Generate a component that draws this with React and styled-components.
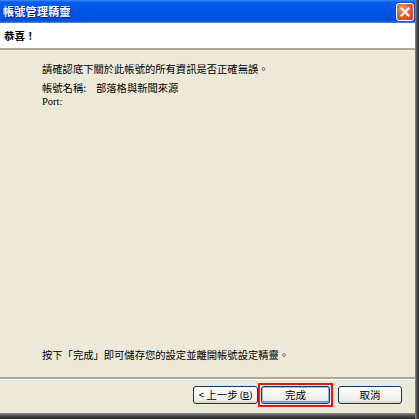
import React from "react";
import styled, { createGlobalStyle } from "styled-components";

const Global = createGlobalStyle`
  html, body { margin: 0; padding: 0; background: #ffffff; }
  body { font-family: "Noto Sans CJK TC", "Noto Sans", sans-serif; }
`;

const Shadowed = styled.div`
  width: 419px;
  height: 419px;
  box-sizing: border-box;
  padding: 0 4px 6px 0;
  background:
    linear-gradient(to right, rgba(255,255,255,0) 415px, #8a8a8a 415px, #4a4a4a 417px, #2e2e2e 419px),
    linear-gradient(to bottom, #ffffff 0, #ffffff 413px, #8c8c8c 413px, #4a4a4a 416px, #262626 419px);
`;

const Window = styled.div`
  width: 415px;
  height: 413px;
  display: flex;
  flex-direction: column;
  background: #ece9d8;
  overflow: hidden;
`;

const TitleBar = styled.div`
  height: 23px;
  flex: none;
  display: flex;
  align-items: center;
  justify-content: space-between;
  padding: 0 1px 0 3px;
  box-sizing: border-box;
  background: linear-gradient(
    to bottom,
    #3d8cf5 0,
    #0a5fe8 2px,
    #0058ec 6px,
    #0053e4 14px,
    #004ed9 20px,
    #1a63e0 22px,
    #6f95d8 23px
  );
`;

const Title = styled.span`
  color: #ffffff;
  font-size: 11px;
  font-weight: 700;
  line-height: 13px;
  letter-spacing: 0.3px;
  text-shadow: 1px 1px 0 #0a1f8a;
`;

const CloseButton = styled.div`
  width: 18px;
  height: 18px;
  box-sizing: border-box;
  border: 1px solid #ffffff;
  border-radius: 3px;
  background: radial-gradient(circle at 35% 30%, #f08e6e 0, #e05a34 55%, #c23c16 100%);
  display: flex;
  align-items: center;
  justify-content: center;
`;

const Header = styled.div`
  height: 27px;
  flex: none;
  box-sizing: border-box;
  background: #ffffff;
  border-bottom: 2px solid #aca899;
  display: flex;
  align-items: center;
  padding-left: 4px;
  font-size: 10.5px;
  font-weight: 700;
  color: #000;
`;

const Body = styled.div`
  flex: 1;
  display: flex;
  flex-direction: column;
  padding: 12px 0 0 42px;
  font-size: 10.3px;
  line-height: 14px;
  color: #000;
`;

const Text = styled.div`
  white-space: nowrap;
`;

const InfoGrid = styled.div`
  display: grid;
  grid-template-columns: 54px auto;
  margin-top: 5px;
  line-height: 13.5px;
`;

const Latin = styled.span`
  font-family: "Liberation Serif", "Noto Sans CJK TC", serif;
  font-size: 10.5px;
`;

const Spacer = styled.div`
  flex: 1;
`;

const Closing = styled.div`
  white-space: nowrap;
  margin-bottom: 15px;
`;

const Footer = styled.div`
  height: 36px;
  flex: none;
  box-sizing: border-box;
  border-top: 2px solid #aca899;
  box-shadow: inset 0 1px 0 #ffffff;
  display: flex;
  align-items: center;
  justify-content: flex-end;
  padding: 0 13px 3px 0;
`;

const Button = styled.button`
  width: ${(p) => p.$w}px;
  height: 18px;
  box-sizing: border-box;
  margin: 0 0 0 ${(p) => p.$gap || 0}px;
  padding: 0;
  border: 1px solid #003c74;
  border-radius: 3px;
  background: linear-gradient(to bottom, #ffffff 0, #f6f6f2 50%, #ecebe4 85%, #d6d0c5 100%);
  box-shadow: ${(p) => (p.$default ? "inset 0 0 0 1px #98b8ea, inset 0 -1px 0 1px #6d8fd8" : "none")};
  font-family: "Noto Sans CJK TC", "Noto Sans", sans-serif;
  font-size: 10.5px;
  line-height: 14px;
  color: #000;
  display: flex;
  align-items: center;
  justify-content: center;
  gap: 2px;
  white-space: nowrap;
`;

const Highlight = styled.div`
  margin-left: 0;
  padding: 1px;
  border: 2px solid #e8141c;
  display: flex;
`;

const BtnLatin = styled.span`
  font-family: "Liberation Sans", sans-serif;
  font-size: 9.5px;
`;

export default function App() {
  return (
    <>
      <Global />
      <Shadowed>
        <Window>
          <TitleBar>
            <Title>帳號管理精靈</Title>
            <CloseButton>
              <svg width="10" height="10" viewBox="0 0 10 10">
                <path d="M1.5 1.5 L8.5 8.5 M8.5 1.5 L1.5 8.5" stroke="#ffffff" strokeWidth="2" strokeLinecap="square" />
              </svg>
            </CloseButton>
          </TitleBar>
          <Header>恭喜！</Header>
          <Body>
            <Text>請確認底下關於此帳號的所有資訊是否正確無誤。</Text>
            <InfoGrid>
              <span>帳號名稱:</span>
              <span>部落格與新聞來源</span>
              <Latin>Port:</Latin>
              <span></span>
            </InfoGrid>
            <Spacer />
            <Closing>按下「完成」即可儲存您的設定並離開帳號設定精靈。</Closing>
          </Body>
          <Footer>
            <Button $w={65}>
              <BtnLatin>&lt;</BtnLatin>
              <span>上一步</span>
              <BtnLatin>
                (<u>B</u>)
              </BtnLatin>
            </Button>
            <Highlight>
              <Button $w={69} $default>完成</Button>
            </Highlight>
            <Button $w={64} $gap={5}>取消</Button>
          </Footer>
        </Window>
      </Shadowed>
    </>
  );
}
